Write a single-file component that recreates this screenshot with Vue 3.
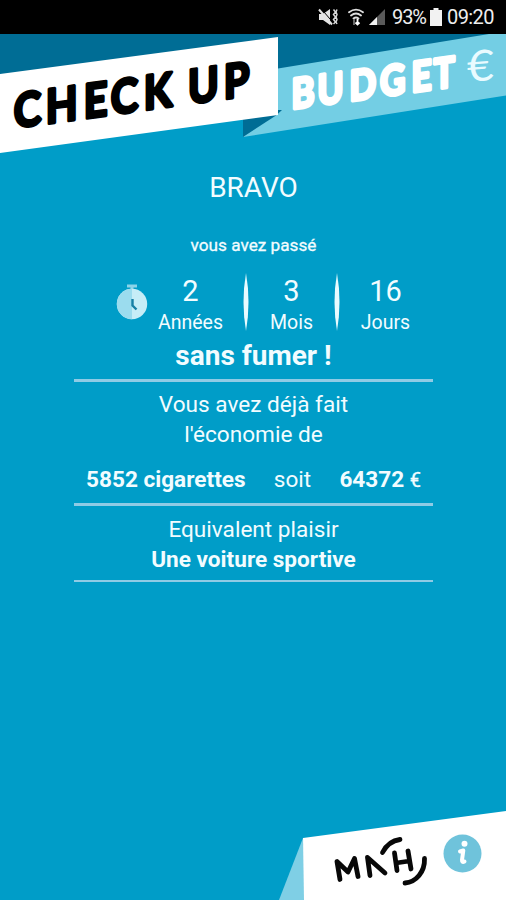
<script setup>
const durations = [
  { value: 2, label: 'Années', size: 'years' },
  { value: 3, label: 'Mois', size: 'months' },
  { value: 16, label: 'Jours', size: 'days' },
]
</script>

<template>
  <div class="screen">
    <div class="status">
      <svg class="status-icons" width="70" height="20" viewBox="0 0 70 20">
        <path d="M1 7h4l7-5v16l-7-5H1z" fill="#e4e4e4" />
        <path d="M3 1.500l12 14" stroke="#000" stroke-width="1" />
        <path d="M1 2.500l13 15" stroke="#e4e4e4" stroke-width="2" />
        <path d="M15.500 2.500l2 2.500-2 2.500 2 2.500-2 2.500 2 2.500-2 2M19 2.500l-1 2.500 1 2.500-1 2.500 1 2.500-1 2.500 1 2" fill="none" stroke="#d8d8d8" stroke-width="1.500" />
        <path d="M31 5.200q7-5 14 0M33 8.500q5-4 10 0M35.500 11.500q2.500-2 5 0" fill="none" stroke="#dedede" stroke-width="1.800" stroke-linecap="round" />
        <path d="M36 12v6" stroke="#666" stroke-width="2" />
        <path d="M39.500 12v6M37.500 15.500l2 2 2-2" stroke="#fff" stroke-width="1.800" fill="none" />
        <path d="M67 2v16H51z" fill="#5a5a5a" />
        <path d="M59 10V18H51z" fill="#f2f2f2" />
      </svg>
      <span class="percent">93%</span>
      <svg class="battery" width="12" height="18" viewBox="0 0 12 18">
        <path d="M3.500 0h5v2H12v16H0V2h3.500z" fill="#f2f2f2" />
      </svg>
      <span class="clock">09:20</span>
    </div>

    <svg class="banner" width="506" height="124" viewBox="0 34 506 124">
      <path d="M0 34H506V60L0 90z" fill="#006d95" />
      <path d="M278 68.500L489 34H506V95.500L243 137L270 100z" fill="#73cee4" />
      <path d="M243 110H282L276 115.500L243 137z" fill="#006d95" />
      <path d="M0 74L278 37V115L0 153z" fill="#fff" />
      <text class="title dark" transform="matrix(.88 -.122 0 1 0 130)" font-size="47" x="15.700 51.900 95.100 125.900 163.300 200 213.600 254.200">CHECK UP</text>
      <text class="title light" transform="matrix(.84 -.117 0 1 0 149.600)" font-size="41.500" x="347 378 416 452.400 489.900 516.500">BUDGET</text>
      <text class="euro-sign" transform="matrix(1 -.080 0 1 467 82)" font-size="43" textLength="27" lengthAdjust="spacingAndGlyphs">€</text>
    </svg>

    <main class="content">
      <h1 class="bravo">BRAVO</h1>
      <p class="passed">vous avez passé</p>

      <div class="time">
        <svg class="stopwatch" width="32" height="38" viewBox="0 0 32 38">
          <path d="M11 3h10M16 2v5" stroke="#8bd3e8" stroke-width="3" />
          <circle cx="16" cy="21" r="15.200" fill="#c6edf7" />
          <path d="M16 5.800a15.200 15.200 0 0 0 0 30.400z" fill="#9bdcee" />
          <path d="M16.500 16v6.500l4 4" fill="none" stroke="#167fa5" stroke-width="2.400" />
        </svg>
        <template v-for="(d, i) in durations" :key="d.label">
          <svg v-if="i" class="divider" width="6" height="58" viewBox="0 0 6 58">
            <path d="M3 0Q8 29 3 58Q-2 29 3 0z" fill="#e8fbff" />
          </svg>
          <div class="unit" :class="d.size">
            <span class="value">{{ d.value }}</span>
            <span class="label">{{ d.label }}</span>
          </div>
        </template>
      </div>

      <p class="smoke-free">sans fumer !</p>

      <section class="panel savings">
        <p>Vous avez déjà fait</p>
        <p>l'économie de</p>
        <div class="amounts">
          <strong class="cigarettes">5852 cigarettes</strong>
          <span class="or">soit</span>
          <span class="money"><strong>64372</strong><span class="currency">€</span></span>
        </div>
      </section>

      <section class="panel treat">
        <p>Equivalent plaisir</p>
        <p class="prize">Une voiture sportive</p>
      </section>
    </main>

    <svg class="footer" width="506" height="92" viewBox="0 808 506 92">
      <path d="M303 838L308 900H279z" fill="#7fcfe5" />
      <path d="M303 838L506 811V900H304z" fill="#fff" />
      <g fill="none" stroke="#080808" stroke-width="4.800" stroke-linecap="round" stroke-linejoin="round">
        <path d="M340 879.500L337 861.500L348 872L354.500 858.500L358 876.500" />
        <path d="M370 875.500L367.500 857.500L385 873" />
        <path d="M382.500 852.500Q388.500 841 400 839.500" />
        <path d="M394.500 853L397 870.500M408 851L411 869M396 863L409.500 861" />
        <path d="M424.500 858.500C425 872 416 882 405 883" />
      </g>
      <circle cx="462.500" cy="853.500" r="19" fill="#6fc3db" />
      <circle cx="464.500" cy="843.700" r="3" fill="#fff" />
      <path d="M460 851.500L463.300 850.500L462 860Q461.800 863 464.500 861.500" fill="none" stroke="#fff" stroke-width="4" stroke-linecap="round" stroke-linejoin="round" />
    </svg>
  </div>
</template>

<style>
body {
  margin: 0;
}
</style>

<style scoped>
.screen {
  display: flex;
  flex-direction: column;
  width: 506px;
  height: 900px;
  overflow: hidden;
  background: #009dc8;
  color: #f2fcff;
  font-family: Roboto, "Liberation Sans", sans-serif;
}

h1,
p {
  margin: 0;
  font-weight: 400;
  white-space: nowrap;
}

svg {
  display: block;
  flex: none;
}

.status {
  display: flex;
  flex: none;
  align-items: center;
  justify-content: flex-end;
  box-sizing: border-box;
  height: 34px;
  padding-right: 12px;
  background: #000;
  color: #eee;
  font-size: 20px;
  white-space: nowrap;
}

.status-icons {
  margin-right: 4px;
}

.percent {
  width: 36px;
  letter-spacing: -1.1px;
}

.battery {
  margin: 0 5px 0 2px;
}

.clock {
  width: 47px;
  letter-spacing: -0.6px;
}

.title {
  font-family: Lato, sans-serif;
  font-weight: 700;
  stroke-linejoin: round;
}

.dark {
  fill: #000;
  stroke: #000;
  stroke-width: 3.4px;
}

.light {
  fill: #fff;
  stroke: #fff;
  stroke-width: 3.8px;
}

.euro-sign {
  font-family: Lato, sans-serif;
  font-weight: 400;
  fill: #e9fbff;
}

.content {
  display: flex;
  flex: 1;
  flex-direction: column;
  align-items: center;
  padding-left: 1px;
  text-align: center;
}

.bravo {
  margin-top: 10px;
  font-size: 28px;
  line-height: 40px;
}

.passed {
  margin-top: 27px;
  font-size: 17.2px;
  line-height: 20px;
  -webkit-text-stroke: 0.3px currentColor;
}

.time {
  display: flex;
  align-items: flex-start;
  align-self: flex-start;
  height: 67px;
  margin-top: 18px;
  padding-left: 115px;
}

.stopwatch {
  margin-top: 10px;
}

.unit {
  display: flex;
  flex-direction: column;
}

.years {
  width: 85px;
  margin-right: 10px;
}

.months {
  width: 85px;
}

.days {
  width: 91px;
}

.value {
  font-size: 29px;
  line-height: 36px;
}

.label {
  font-size: 19.5px;
  line-height: 28px;
}

.smoke-free {
  font-size: 28px;
  font-weight: 700;
  line-height: 32px;
}

.panel {
  box-sizing: border-box;
  width: 359px;
  border-top: 3px solid #8fcbe5;
  font-size: 22.6px;
  line-height: 30px;
}

.savings {
  height: 124px;
  margin-top: 7px;
  padding-top: 8px;
}

.amounts {
  display: flex;
  align-items: baseline;
  justify-content: space-between;
  margin-top: 15px;
  padding: 0 12px;
}

.currency {
  margin-left: 5.5px;
  font-size: 20px;
  -webkit-text-stroke: 0.3px currentColor;
}

.treat {
  height: 79px;
  padding-top: 9px;
  border-bottom: 2px solid #8fcbe5;
}

.prize {
  font-weight: 700;
}
</style>
